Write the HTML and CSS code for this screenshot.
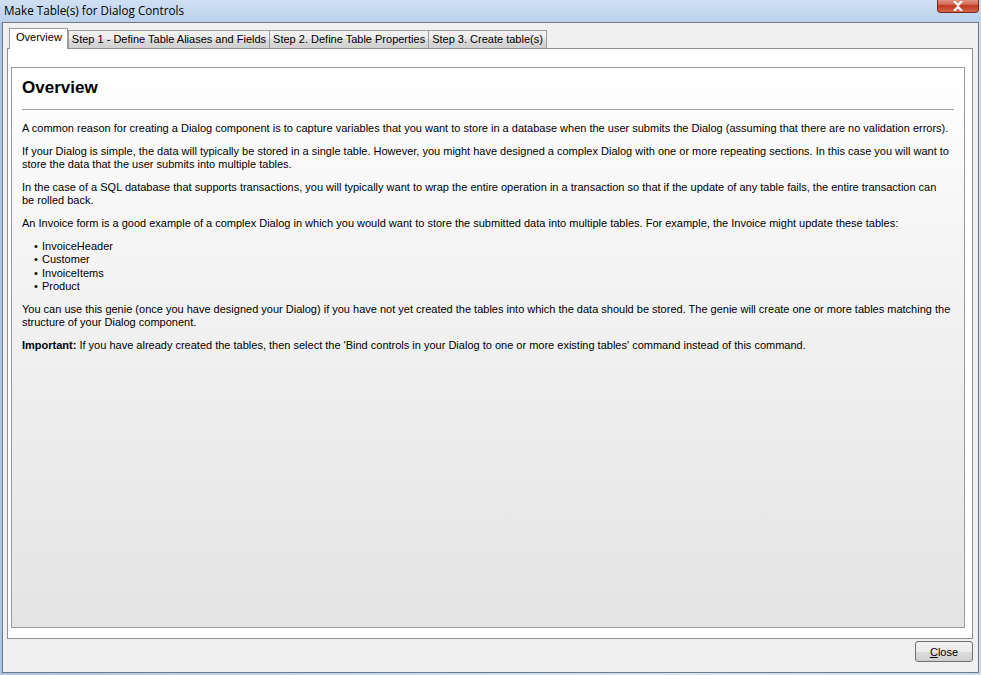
FILE: index.html
```html
<!DOCTYPE html>
<html>
<head>
<meta charset="utf-8">
<link rel="stylesheet" href="styles.css">
</head>
<body>
<div class="window">
  <div class="titlebar">
    <span class="title">Make Table(s) for Dialog Controls</span>
    <div class="closex"><svg width="14" height="10" viewBox="0 0 14 10"><path d="M3 0 L7 4 L11 0 M3 10 L7 6 L11 10" stroke="#fff" stroke-width="2.4" fill="none"/></svg></div>
  </div>
  <div class="client">
    <div class="tabs">
      <div class="tab active">Overview</div>
      <div class="tab">Step 1 - Define Table Aliases and Fields</div>
      <div class="tab">Step 2. Define Table Properties</div>
      <div class="tab">Step 3. Create table(s)</div>
    </div>
    <div class="panel">
      <div class="content">
        <h1>Overview</h1>
        <hr>
        <p>A common reason for creating a Dialog component is to capture variables that you want to store in a database when the user submits the Dialog (assuming that there are no validation errors).</p>
        <p>If your Dialog is simple, the data will typically be stored in a single table. However, you might have designed a complex Dialog with one or more repeating sections. In this case you will want to<br>store the data that the user submits into multiple tables.</p>
        <p>In the case of a SQL database that supports transactions, you will typically want to wrap the entire operation in a transaction so that if the update of any table fails, the entire transaction can<br>be rolled back.</p>
        <p>An Invoice form is a good example of a complex Dialog in which you would want to store the submitted data into multiple tables. For example, the Invoice might update these tables:</p>
        <ul>
          <li>InvoiceHeader</li>
          <li>Customer</li>
          <li>InvoiceItems</li>
          <li>Product</li>
        </ul>
        <p>You can use this genie (once you have designed your Dialog) if you have not yet created the tables into which the data should be stored. The genie will create one or more tables matching the<br>structure of your Dialog component.</p>
        <p><b>Important:</b> If you have already created the tables, then select the 'Bind controls in your Dialog to one or more existing tables' command instead of this command.</p>
      </div>
    </div>
    <div class="footer">
      <button class="btn"><u>C</u>lose</button>
    </div>
  </div>
</div>
</body>
</html>
```

FILE: styles.css
```css
* { box-sizing: border-box; }
html, body { margin: 0; padding: 0; }
body {
  width: 981px;
  height: 675px;
  overflow: hidden;
  font-family: "Liberation Sans", Arial, sans-serif;
  background: linear-gradient(90deg, #a9c6e6 0%, #c6daf0 40%, #d9e7f5 70%, #c9dcf0 100%);
}
.window {
  display: flex;
  flex-direction: column;
  height: 675px;
}
.titlebar {
  height: 22px;
  position: relative;
  background: linear-gradient(180deg, #cfe0f3 0%, #c3d7ee 60%, #bcd2eb 100%);
}
.title {
  position: absolute;
  left: 4px;
  top: 2px;
  font-size: 11.7px;
  color: #000;
  font-family: "Open Sans", "Liberation Sans", sans-serif;
}
.closex {
  position: absolute;
  left: 937px;
  top: -2px;
  width: 42px;
  height: 15px;
  border: 1px solid #7a2a20;
  border-top: none;
  border-radius: 0 0 4px 4px;
  background: linear-gradient(180deg, #e6a597 0%, #d36b57 45%, #c0391f 55%, #d2674c 100%);
  display: flex;
  align-items: center;
  justify-content: center;
  padding-top: 1px;
}
.client {
  flex: 1;
  margin: 0 2px 2px 2px;
  border: 1px solid #6e7a89;
  background: #f0f0f0;
  display: flex;
  flex-direction: column;
  padding: 4px 4px 0 4px;
}
.tabs {
  display: flex;
  height: 21px;
  align-items: flex-end;
  padding-left: 3px;
  position: relative;
  z-index: 1;
}
.tab {
  height: 18px;
  border: 1px solid #9c9c9c;
  border-bottom: none;
  background: linear-gradient(180deg, #f2f2f2 0%, #ebebeb 50%, #dddddd 50%, #cfcfcf 100%);
  font-size: 11px;
  padding: 2px 3px 0 3px;
  margin-right: -1px;
  white-space: nowrap;
  color: #000;
}
.tab.active {
  height: 21px;
  background: #fff;
  padding: 2px 5px 0 6px;
  margin-right: 0;
  margin-left: -1px;
  position: relative;
  top: 1px;
  z-index: 2;
  border-color: #9c9c9c;
}
.panel {
  height: 591px;
  margin-right: 1px;
  background: #fff;
  border: 1px solid #8e8f8f;
  padding: 18px 7px 10px 3px;
}
.content {
  height: 100%;
  border: 1px solid #9a9a9a;
  background: linear-gradient(180deg, #ffffff 0%, #f5f5f5 30%, #e4e4e4 100%);
  padding: 9px 10px 0 10px;
  font-size: 11px;
  line-height: 13px;
  color: #000;
}
h1 {
  margin: 0 0 10px 0;
  font-size: 17px;
  font-weight: bold;
  line-height: 22px;
}
hr {
  border: none;
  border-top: 1px solid #a0a0a0;
  margin: 0 0 12px 0;
}
p { margin: 0 0 10px 0; }
ul {
  margin: 0 0 10px 0;
  padding-left: 20px;
  list-style: none;
}
li { position: relative; line-height: 13.3px; }
li::before {
  content: "\2022";
  position: absolute;
  left: -8px;
  top: 0;
  font-size: 11px;
}
.footer {
  flex: 1;
  display: flex;
  justify-content: flex-end;
  align-items: flex-start;
  padding: 2px 0 0 0;
}
.btn {
  width: 58px;
  height: 21px;
  margin-right: 1px;
  border: 1px solid #707070;
  border-radius: 3px;
  background: linear-gradient(180deg, #f2f2f2 0%, #ebebeb 50%, #dddddd 50%, #cfcfcf 100%);
  font-family: "Liberation Sans", sans-serif;
  font-size: 11px;
  padding: 0;
  color: #000;
}
```
